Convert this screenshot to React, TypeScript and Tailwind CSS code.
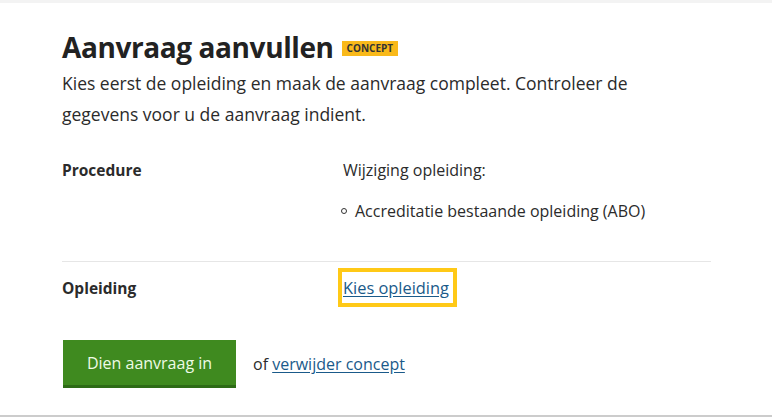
export default function App() {
  return (
    <div
      className="h-[417px] w-full overflow-hidden bg-white text-[#2b2b2b] border-t-[3px] border-t-[#f3f3f3] border-b-2 border-b-[#cccccc]"
      style={{ fontFamily: "'Open Sans', Lato, sans-serif" }}
    >
      <div className="pl-[62px] pr-[61px] pt-[24px]">
        <div className="flex items-center gap-[8px]">
          <h1 className="text-[28px] leading-[40px] font-bold tracking-[-0.4px] text-[#222]">Aanvraag aanvullen</h1>
          <span className="mt-[3px] bg-[#f9b91a] px-[5px] text-[10px] leading-[15px] font-bold uppercase text-[#333]">
            Concept
          </span>
        </div>
        <p className="mt-[1px] max-w-[600px] text-[17.5px] leading-[31px]">
          Kies eerst de opleiding en maak de aanvraag compleet. Controleer de gegevens voor u de aanvraag indient.
        </p>

        <dl className="mt-[28px] text-[16px]">
          <div className="flex border-b border-[#e6e6e6] pb-[38px]">
            <dt className="w-[281px] shrink-0 text-[15.5px] font-bold leading-[24px]">Procedure</dt>
            <dd className="leading-[24px]">
              <p>Wijziging opleiding:</p>
              <ul className="mt-[17px] -ml-[2px]">
                <li className="flex items-center gap-[8px]">
                  <span className="h-[6px] w-[6px] rounded-full border border-[#333]" />
                  Accreditatie bestaande opleiding (ABO)
                </li>
              </ul>
            </dd>
          </div>
          <div className="flex pt-[12px]">
            <dt className="w-[281px] shrink-0 pt-[2px] text-[15.5px] font-bold leading-[24px]">Opleiding</dt>
            <dd className="-ml-[5px] -mt-[6px]">
              <a
                href="#"
                className="block border-4 border-[#ffc917] pl-[1px] pr-[4px] py-[4px] text-[16.4px] leading-[23px] text-[#1a5a8a] underline underline-offset-2"
              >
                Kies opleiding
              </a>
            </dd>
          </div>
        </dl>

        <div className="mt-[33px] flex items-center gap-[17px] pl-[1px]">
          <button className="h-[48px] w-[173px] border-b-[3px] border-b-[#2d6b16] bg-[#3f8a1f] text-[16px] text-[#eefbe6]">
            Dien aanvraag in
          </button>
          <span className="text-[16px]">
            of{" "}
            <a href="#" className="text-[#1a5a8a] underline underline-offset-2">
              verwijder concept
            </a>
          </span>
        </div>
      </div>
    </div>
  );
}
